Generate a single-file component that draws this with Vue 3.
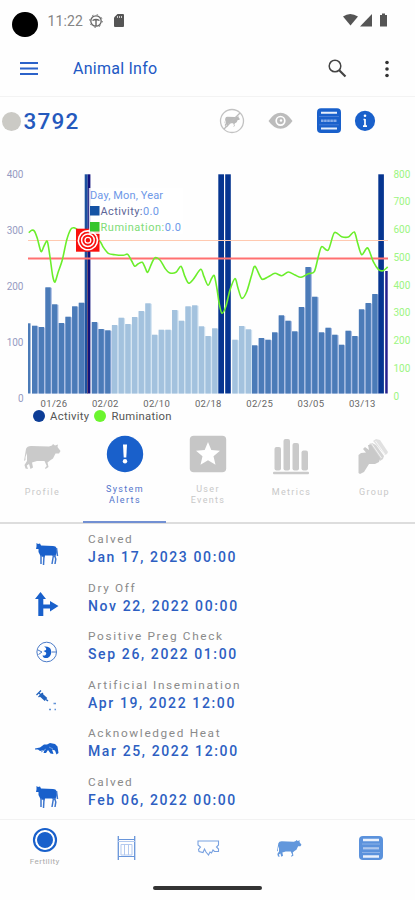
<script setup>
const bars = []
function addBars(start, tops, kind) {
  tops.forEach((top, i) => bars.push({ x: start + i * 6.68, top, kind }))
}
addBars(32, [325.7, 327, 287.3, 304.3, 323, 316.7, 306.3, 302.7], 'mid')
addBars(91.8, [322, 329, 330.3], 'mid')
addBars(111.9, [325, 317.7, 324, 317, 311, 303.3, 334.7, 329.7, 329.7, 310, 320.7, 306.3, 305.3, 326.3, 336, 328.3], 'light')
addBars(232.3, [339.7, 326, 329.3], 'light')
addBars(252, [345.3, 338, 339.7, 332.3, 315.3, 320.7, 331.3, 307, 267, 296.7, 332.3, 327.7, 334.7, 344.7, 330.7, 336, 309.3, 303, 294], 'mid')

const base = 393.5
const points = [
  [28.7, 232.7], [31.7, 230.3], [34.3, 231], [37.3, 238.3], [41, 251.5], [44, 246], [47.3, 241.3], [50, 257], [52.7, 276], [55, 282], [58.3, 271.7], [62.3, 260], [66.7, 240], [70.7, 229.3], [74, 227.7], [78, 230], [88, 235], [99.3, 240.7], [103.3, 247.3], [108.3, 253.3], [115, 254.8], [123.3, 255.3], [127.7, 254.3], [131.7, 261], [134.7, 266.3], [138.3, 263.7], [142.3, 262.3], [145, 267.3], [147.7, 272.3], [151.7, 263.3], [155, 257.7], [160, 260], [165, 268.3], [169.3, 272.7], [176, 272.3], [181, 266.3], [185, 276.7], [188.7, 283.3], [193.3, 279.3], [200.7, 269.3], [204, 276.7], [208, 285.3], [211.7, 278.3], [214.3, 275.7], [217, 289], [219.3, 304], [222, 313.3], [226, 306], [230, 290], [235, 278.5], [238, 288], [241.7, 298.3], [246.7, 291.7], [251.7, 275], [255, 266.3], [261.7, 279], [268.3, 276.7], [275, 273.3], [281.7, 275.7], [288.3, 272], [295, 275], [301, 277.3], [308.3, 273.7], [314.3, 271.7], [318.3, 256.7], [321.7, 246.7], [328.3, 250], [334.3, 232.7], [341.7, 236.7], [348.3, 237], [354.3, 232], [357.7, 243.3], [361.7, 254.7], [367.7, 248], [373.3, 261.7], [378.3, 269.3], [383, 270.7], [387.7, 267]
]
function smooth(p) {
  let d = `M${p[0]}`
  for (let i = 0; i < p.length - 1; i++) {
    const a = p[Math.max(0, i - 1)], b = p[i], c = p[i + 1], e = p[Math.min(p.length - 1, i + 2)]
    d += `C${b[0] + (c[0] - a[0]) / 7} ${b[1] + (c[1] - a[1]) / 7} ${c[0] - (e[0] - b[0]) / 7} ${c[1] - (e[1] - b[1]) / 7} ${c[0]} ${c[1]}`
  }
  return d
}
const line = smooth(points)

const leftAxis = [['400', 174], ['300', 230], ['200', 286.5], ['100', 342.5], ['0', 398.5]]
const rightAxis = [['800', 174], ['700', 201.7], ['600', 229.3], ['500', 257.3], ['400', 285], ['300', 312.7], ['200', 340.7], ['100', 368], ['0', 396]]
const dates = [['01/26', 54], ['02/02', 105.3], ['02/10', 156.7], ['02/18', 208.3], ['02/25', 259.7], ['03/05', 311], ['03/13', 362.3]]

const events = [
  { name: 'Calved', date: 'Jan 17, 2023 00:00', icon: 'calved' },
  { name: 'Dry Off', date: 'Nov 22, 2022 00:00', icon: 'dry' },
  { name: 'Positive Preg Check', date: 'Sep 26, 2022 01:00', icon: 'preg' },
  { name: 'Artificial Insemination', date: 'Apr 19, 2022 12:00', icon: 'syringe' },
  { name: 'Acknowledged Heat', date: 'Mar 25, 2022 12:00', icon: 'heat' },
  { name: 'Calved', date: 'Feb 06, 2022 00:00', icon: 'calved' }
]
const cow = 'M2 5Q3 2 7 2L25 2.500L28 1.500L29 0L31 1.500L34 .5L33.500 3L36.500 7L35 9.500L31.500 9.500L29 14.500L26 16.500L23.500 18.500L24.500 23L21.500 25L21 24L22.800 22L20.500 17L13 17L8 18.500L9 23.500L6.500 25L5 20L2.800 21.500L4 25L1.500 24.500L.5 21L3 17L3 9L1.500 13L1.500 16L0 17Z'
</script>

<template>
  <div class="screen">
    <header class="status">
      <span class="camera"></span>
      <span class="clock">11:22</span>
      <svg class="gear" width="14" height="14" viewBox="0 0 14 14" fill="none" stroke="#666">
        <circle cx="7" cy="7" r="5.200" stroke-width="1.300" />
        <circle cx="7" cy="7" r="6.300" stroke-width="1" stroke-dasharray="1.500 3.448" />
        <path d="M3.500 6.500Q7 4.500 10.500 6.500M7 5.500V12" stroke-width="1.400" />
      </svg>
      <svg class="sd" width="10" height="13" viewBox="0 0 10 13">
        <path d="M3.500 0H9Q10 0 10 1V12Q10 13 9 13H1Q0 13 0 12V3.500Z" fill="#555" />
        <path d="M3.500 2V4M5.500 2V4M7.500 2V4" stroke="#ccc" />
      </svg>
      <svg class="signals" width="45" height="15" viewBox="343 13 45 15" fill="#555">
        <path d="M343 16.500Q350 11.500 358 16.500L350.500 25.500Z" />
        <path d="M372 14V26.500H360Z" />
        <path d="M380 15H382V13.500H385V15H387V26.500H380Z" />
      </svg>
    </header>

    <nav class="appbar">
      <svg class="menu" width="18" height="13" viewBox="0 0 18 13"><path d="M0 1H18M0 6.500H18M0 12H18" stroke="#2b62c9" stroke-width="1.800" /></svg>
      <h1>Animal Info</h1>
      <svg class="search" width="19" height="19" viewBox="0 0 19 19" fill="none" stroke="#444">
        <circle cx="7" cy="7" r="5.800" stroke-width="1.500" /><path d="M11.200 11.200L17.500 17.500" stroke-width="2.200" />
      </svg>
      <svg class="dots" width="4" height="18" viewBox="0 0 4 18" fill="#333"><circle cx="2" cy="2.500" r="1.800" /><circle cx="2" cy="9" r="1.800" /><circle cx="2" cy="15.500" r="1.800" /></svg>
    </nav>

    <section class="animal">
      <span class="dot"></span>
      <strong>3792</strong>
      <svg class="tools" width="160" height="28" viewBox="218 107 160 28">
        <circle cx="232" cy="121" r="11.500" stroke-width="1.300" fill="none" stroke="#c2c2c2" />
        <path :d="cow" fill="#b9b9b9" transform="translate(224.500 116) scale(.42 .43)" />
        <path d="M224 129L240 113" stroke="#bcbcbc" stroke-width="1.300" />
        <path d="M268.500 121Q274 112.800 280.500 112.800Q287 112.800 292.500 121Q287 128.800 280.500 128.800Q274 128.800 268.500 121Z" fill="#bcbcbc" />
        <circle cx="280.500" cy="120.800" r="4.300" fill="#bcbcbc" stroke="#fff" stroke-width="1.700" />
        <circle cx="281" cy="120.500" r="1.200" fill="#fff" />
        <rect x="317" y="108.300" width="24" height="24.700" rx="4" fill="#1960cb" />
        <path d="M321 112.800H337M321 128.500H337" stroke="#e7effc" stroke-width="2" />
        <path d="M319 116.500H339M319 124.800H339" stroke="#447bd5" />
        <path d="M321 120.800H337" stroke="#86abe7" stroke-width="2.600" stroke-dasharray="2.600 .5" />
        <circle cx="365" cy="120.800" r="10.100" fill="#1960cb" />
        <path d="M365 119V126M363.500 119.500H365M363 126.200H367" stroke="#fff" stroke-width="1.700" /><circle cx="365" cy="115.700" r="1.300" fill="#fff" />
      </svg>
    </section>

    <svg class="chart" width="415" height="260" viewBox="0 145 415 260">
      <rect x="28" y="323.300" width="2.500" height="70.200" class="mid" />
      <template v-for="b in bars" :key="b.x">
        <rect :x="b.x" :y="b.top + .5" width="6.500" :height="base - b.top - .5" :class="b.kind + '-gap'" />
        <rect :x="b.x" :y="b.top" width="5.300" :height="base - b.top" :class="b.kind" />
      </template>
      <rect x="84.700" y="174.300" width="3" height="219.200" fill="#1c519f" />
      <rect x="87.700" y="174.300" width="2.700" height="219.200" fill="#12127e" />
      <rect x="87.200" y="250" width=".8" height="143.500" fill="#75506d" />
      <rect x="218.300" y="174.300" width="5.700" height="219.200" fill="#063590" />
      <rect x="225.200" y="174.300" width="5.600" height="219.200" fill="#063590" />
      <rect x="378.300" y="174.300" width="5.600" height="219.200" fill="#063590" />
      <rect x="385.200" y="271" width="2.500" height="122.500" fill="#25218e" />
      <path d="M28 240.500H388" stroke="#ffc9b0" stroke-width="1" />
      <path d="M28 258.500H388" stroke="#ff7070" stroke-width="2" />
      <path :d="line" fill="none" stroke="#6bee2b" stroke-width="1.600" stroke-linejoin="round" />
      <rect x="76" y="228.700" width="23.500" height="23" fill="#f9100e" />
      <g fill="none" stroke="#fff"><path d="M84 231.600A9.500 9.500 0 1 0 96.500 236.200" stroke-width="1.600" /><path d="M84 231.600Q92 229 96.500 236.200" stroke-width="1.600" /><circle cx="87.900" cy="240.200" r="6.300" stroke-width="1.500" /><circle cx="87.900" cy="240.200" r="2.900" stroke-width="1.300" /></g>
      <rect x="88.800" y="188" width="94" height="46" fill="#fff" fill-opacity=".78" />
      <g font-size="11">
        <text x="90" y="199" fill="#6e98e8" textLength="73">Day, Mon, Year</text>
        <rect x="90" y="206" width="9.500" height="9.500" fill="#1553a4" />
        <text x="100.500" y="214.800" fill="#5d6597" textLength="58.500">Activity:<tspan fill="#6e98e8">0.0</tspan></text>
        <rect x="90" y="222" width="9.500" height="9.500" fill="#35c52d" />
        <text x="100.500" y="231" fill="#80dc78" textLength="80.500">Rumination:<tspan fill="#6e98e8">0.0</tspan></text>
      </g>
      <g class="axis" fill="#969bc2" text-anchor="end"><text v-for="l in leftAxis" :key="l[0]" x="23.500" :y="l[1] + 3.800">{{ l[0] }}</text></g>
      <g class="axis" fill="#9cf582"><text v-for="r in rightAxis" :key="r[0]" x="393.500" :y="r[1] + 3.600">{{ r[0] }}</text></g>
      <g class="dates" fill="#666" text-anchor="middle"><text v-for="d in dates" :key="d[0]" :x="d[1]" y="407">{{ d[0] }}</text></g>
    </svg>
    <div class="legend">
      <i class="blue"></i><span>Activity</span><i class="green"></i><span>Rumination</span>
    </div>

    <nav class="tabs">
      <div class="tab">
        <svg width="38" height="38" viewBox="0 0 38 38"><path :d="cow" fill="#cacaca" transform="translate(1 9)" /></svg>
        <span>Profile</span>
      </div>
      <div class="tab active">
        <svg width="38" height="38" viewBox="0 0 38 38"><circle cx="19" cy="19" r="18.200" fill="#1960cb" /><path d="M17 9.500H21L20.300 22.500H17.700Z" fill="#fff" /><circle cx="19" cy="26.200" r="2.200" fill="#fff" /></svg>
        <span class="two">System<br />Alerts</span>
      </div>
      <div class="tab">
        <svg width="38" height="38" viewBox="0 0 38 38"><rect x=".8" y=".8" width="36.400" height="36.400" rx="4" fill="#c6c6c6" /><path d="M19 7L22.300 15L31 15.700L24.500 21.300L26.500 29.800L19 25.200L11.500 29.800L13.500 21.300L7 15.700L15.700 15Z" fill="#fff" /></svg>
        <span class="two">User<br />Events</span>
      </div>
      <div class="tab">
        <svg width="38" height="40" viewBox="0 0 38 40" fill="#cacaca"><rect x="2.500" y="12" width="6.500" height="23.500" rx="2" /><rect x="11.500" y="4" width="6.500" height="31.500" rx="2" /><rect x="20.500" y="8" width="6.500" height="27.500" rx="2" /><rect x="29.500" y="15.500" width="6.500" height="20" rx="2" /><rect x="1" y="36.700" width="36" height="2.600" rx="1" /></svg>
        <span class="up">Metrics</span>
      </div>
      <div class="tab">
        <svg width="38" height="40" viewBox="0 0 38 40">
          <path d="M18 6L21 4L25 5L33 17L32 19L30 20Z" fill="#e1e1e1" />
          <path d="M14 9L17 8L21 10L29 21L28 24L25 26Z" fill="#d5d5d5" />
          <path d="M3.500 20L6 18L11 17.500L8 14L10 12L14 15L13 10L16 10L25 23L24 27L20 29L14 29L9 37L5 39L3.500 38Z" fill="#c9c9c9" />
          <path d="M16.500 8.500L26.500 23M20.500 6L30 19.500" stroke="#fff" stroke-width=".7" />
        </svg>
        <span class="up">Group</span>
      </div>
    </nav>

    <ul class="events">
      <li v-for="e in events" :key="e.date">
        <svg width="24" height="24" viewBox="0 0 24 24">
          <g v-if="e.icon === 'calved'">
            <path d="M1.500 0L3 1L5 .5L6 2.500L18 3Q21 3 21.500 5L22 9L20 14L17 12.500L10 12.500L9.500 14.500L5.500 13L3.500 9L3.500 6L1 6L1.500 3.500Z" fill="#1960cb" />
            <path d="M6 12V21M9 13L8.500 22M18.500 12L17 21M19.500 12L20.800 16L20 21M21.500 5L22.500 13" stroke="#3d76ce" stroke-width="1.500" fill="none" />
          </g>
          <path v-else-if="e.icon === 'dry'" d="M5.500 0L11 7H8.300V12.500H15V9L23.500 14L15 19.500V16.500H8.300V24H3.300V7H0Z" fill="#1960cb" />
          <g v-else-if="e.icon === 'preg'">
            <circle cx="11.700" cy="12" r="9.800" fill="none" stroke="#4b7bc8" stroke-width="1" />
            <path d="M9 6.500Q15 6 16 10Q17 16 12.500 18Q8 18.500 7.500 15.500L10 15.500Q12 14 11 12.500L8.500 11L11 10Q12 8 9 6.500Z" fill="#1960cb" />
            <path d="M3 10L7 12L3.500 14.500M16.500 12H21" stroke="#4b7bc8" fill="none" />
          </g>
          <g v-else-if="e.icon === 'syringe'" fill="none" stroke="#2363bd">
            <path d="M1.500 6L6 1.500M3.500 3.500L6 6M3.500 8L8 4" stroke-width="1.300" /><path d="M5.500 5.500L11 10.500" stroke-width="3.800" /><path d="M11 10.500L13 12" stroke-width="1.500" />
            <path d="M14 20.500H16M18.500 14.500H21M19.500 20.500H21" stroke="#6393d7" stroke-width="1.500" />
          </g>
          <g v-else transform="translate(0 -1)">
            <path d="M0 12.500L5 11.500L9 8.500L12 8.500L15 7L20 8L22.500 10.500L23.500 17L21.500 18.500L20 14.500L17 13.500L18.500 18L15.500 17.500L13 14L11 17H8.500L9.500 14L5 15L3 13.500L0 13.500Z" fill="#1960cb" />
            <path d="M6 16L11 13M14 11L18 13" stroke="#709de0" />
          </g>
        </svg>
        <div class="event-text"><span>{{ e.name }}</span><b>{{ e.date }}</b></div>
      </li>
    </ul>

    <footer class="bottom">
      <div class="nav-item selected">
        <svg width="26" height="26" viewBox="0 0 26 26"><circle cx="13" cy="13" r="11" fill="none" stroke="#1960cb" stroke-width="2.200" /><circle cx="13" cy="13" r="8" fill="#1960cb" /><circle cx="13" cy="13" r="8.900" fill="none" stroke="#fff" stroke-width="1.100" stroke-dasharray="3 .7" /></svg>
        <span>Fertility</span>
      </div>
      <div class="nav-item">
        <svg width="26" height="26" viewBox="0 0 26 26" fill="none" stroke="#6895da"><path d="M5.300 1V25M21.700 1V25" stroke-width="1.300" /><path d="M5 4.500H22M5 21.500H22" /><path d="M8 9.500H19V20H8ZM11.500 9.500V20M15.500 9.500V20M5 6.500H22" stroke="#b3c9ef" /></svg>
      </div>
      <div class="nav-item">
        <svg width="26" height="26" viewBox="0 0 26 26" fill="none" stroke="#78a1e0"><path d="M3 6H23.500V10L21.500 12L23.500 14V16.500H19.500L18 15L16.500 18L15 17L13.500 20L11 17L9.500 14L8 17.500L4 16.500L3.500 14.500L5.500 12L3 10Z" stroke-width="1.100" /></svg>
      </div>
      <div class="nav-item">
        <svg width="26" height="26" viewBox="0 0 26 26"><path :d="cow" fill="#6297dc" transform="translate(1 5) scale(.67)" /></svg>
      </div>
      <div class="nav-item">
        <svg width="26" height="26" viewBox="0 0 26 26"><rect x="1" y="1" width="24" height="24" rx="4" fill="#5b92dc" /><path d="M5 5H21M5 21.500H21" stroke="#eaf1fc" stroke-width="2.300" /><path d="M4 9H22M4 17.500H22" stroke="#8bb1e7" /><path d="M5 13.300H21" stroke="#afc8ed" stroke-width="2.200" /></svg>
      </div>
    </footer>
    <div class="handle"><span></span></div>
  </div>
</template>

<style>
body { margin: 0; background: #fefefe; }
</style>
<style scoped>
.screen { width: 415px; height: 900px; overflow: hidden; display: flex; flex-direction: column; background: #fefefe; font-family: Roboto, sans-serif; color: #555; }
svg { display: block; flex: none; }
.status { height: 41px; display: flex; align-items: center; box-sizing: border-box; padding-left: 12px; flex: none; }
.camera { width: 25.500px; height: 25.500px; border-radius: 50%; background: #000; margin-top: 8px; }
.clock { width: 41.500px; margin-left: 10px; font-size: 14px; letter-spacing: .1px; color: #858585; }
.sd { margin-left: 10.500px; }
.signals { margin-left: auto; margin-right: 27px; }
.appbar { height: 56px; box-sizing: border-box; border-bottom: 1px solid #f3f3f3; display: flex; align-items: center; padding-left: 20px; flex: none; }
h1 { margin: 0 0 0 35px; font-size: 16px; font-weight: 400; color: #2158c4; letter-spacing: .25px; }
.search { margin-left: auto; }
.dots { margin-left: 38px; margin-right: 26px; }
.animal { height: 48px; display: flex; align-items: center; flex: none; padding-left: 2px; }
.dot { width: 19px; height: 19px; border-radius: 50%; background: #cbcac5; }
.animal strong { margin-left: 2.500px; font-size: 22.500px; font-weight: 500; letter-spacing: 1.200px; color: #2459bd; }
.tools { margin-left: auto; margin-right: 37px; }
.chart { width: 415px; height: 260px; overflow: visible; }
.chart text { font-family: Roboto, sans-serif; }
.axis { font-size: 10px; }
.dates { font-size: 9.500px; letter-spacing: .3px; }
.mid { fill: #4b7bb8; }
.mid-gap { fill: #acbfe5; }
.light { fill: #a3c2de; }
.light-gap { fill: #d0e2f1; }
.legend { height: 22px; padding-left: 33px; display: flex; align-items: center; font-size: 11.300px; letter-spacing: .3px; flex: none; }
.legend i { width: 12px; height: 12px; border-radius: 50%; background: #0d3d96; }
.legend i.green { background: #6bf52e; }
.legend span { margin: 0 5px; }
.tabs { height: 97px; flex: none; box-sizing: border-box; padding-top: 8px; border-bottom: 2px solid #ddd; display: flex; color: #c8c8c8; }
.tab { width: 83px; flex: none; display: flex; flex-direction: column; align-items: center; position: relative; }
.tab span { margin-top: 13.500px; text-align: center; font-size: 9px; line-height: 10.500px; letter-spacing: 1.350px; padding-left: 2px; }
.tab span.two { margin-top: 11px; padding-left: 1px; }
.tab span.up { margin-top: 11.500px; }
.active { color: #5274cb; }
.active::after { content: ''; position: absolute; left: 0; right: 0; bottom: -1px; height: 2px; background: #7290d3; }
.events { margin: 0; padding: 6px 0 0; height: 295px; box-sizing: border-box; list-style: none; flex: none; }
.events li { height: 48.600px; display: flex; padding-left: 35px; }
.events li svg { margin-top: 13px; }
.event-text { display: flex; flex-direction: column; margin-left: 29px; }
.event-text span { font-size: 11.800px; line-height: 19px; letter-spacing: 1.650px; color: #8a8a8a; }
.event-text b { font-size: 14px; line-height: 17px; font-weight: 500; letter-spacing: 1.620px; color: #2d5fc2; }
.bottom { height: 60px; flex: none; box-sizing: border-box; border-top: 1px solid #f2f2f2; display: flex; padding-left: 4px; }
.nav-item { width: 81.500px; display: flex; flex-direction: column; align-items: center; padding-top: 15px; flex: none; }
.selected { padding-top: 7px; }
.nav-item span { margin-top: 3px; font-size: 8px; line-height: 12px; color: #aaa; letter-spacing: .4px; }
.handle { display: flex; justify-content: center; padding-top: 7px; }
.handle span { width: 109px; height: 4px; border-radius: 2px; background: #333; }
</style>
